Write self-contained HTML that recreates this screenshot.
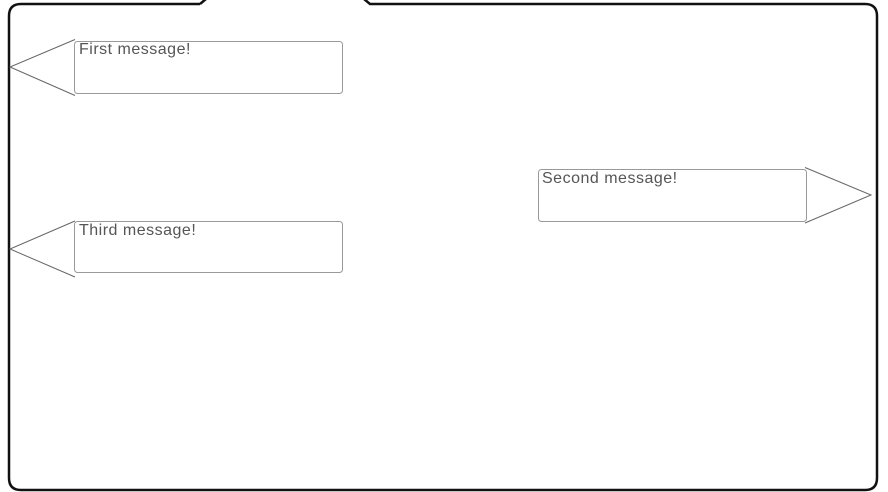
<!DOCTYPE html>
<html><head><style>
body{margin:0;width:888px;height:492px;background:#fff;overflow:hidden;position:relative;font-family:"Liberation Sans",Arial,sans-serif}
.t{position:absolute;font-size:16px;letter-spacing:0.5px;color:#555;line-height:16px}
</style></head><body>
<svg width="888" height="492" style="position:absolute;left:0;top:0">
<path d="M200,4 L206,-1 M364,-1 L370,4 L865,4 Q877,4 877,16 L877,478 Q877,490 865,490 L21,490 Q9,490 9,478 L9,16 Q9,4 21,4 L200,4" fill="none" stroke="#111" stroke-width="2.5"/>
<g fill="none" stroke="#999" stroke-width="1">
<rect x="74.5" y="41.5" width="268" height="52" rx="3"/>
<rect x="538.5" y="169.5" width="268" height="52" rx="3"/>
<rect x="74.5" y="221.5" width="268" height="51" rx="3"/>
</g>
<g fill="none" stroke="#666" stroke-width="1">
<path d="M75,39.5 L10,67 L75,95.5"/>
<path d="M805,167.5 L871,195 L805,223"/>
<path d="M75,221 L10,249 L75,277"/>
</g>
</svg>
<div class="t" style="left:79px;top:42px">First message!</div>
<div class="t" style="left:542px;top:171px">Second message!</div>
<div class="t" style="left:79px;top:223px">Third message!</div>
</body></html>
